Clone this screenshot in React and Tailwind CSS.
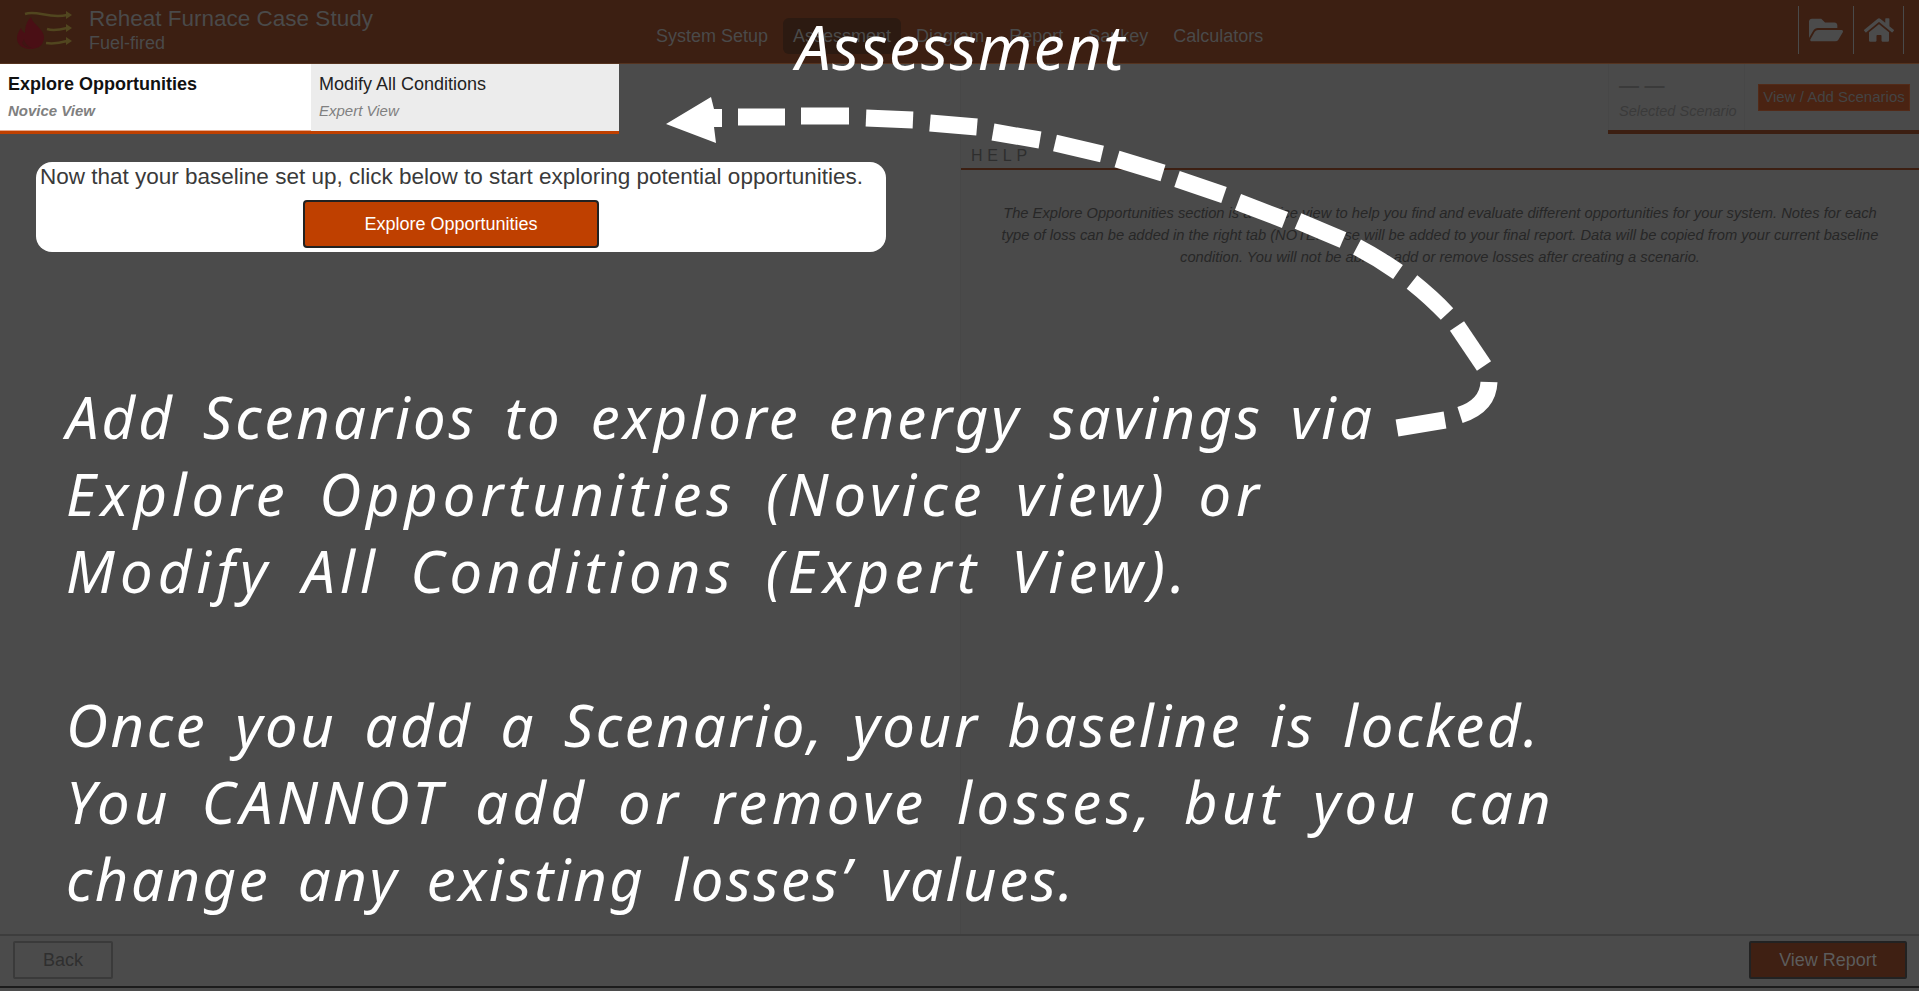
import React from 'react';
import { FaFolderOpen, FaHome } from 'react-icons/fa';

const arial = { fontFamily: '"Liberation Sans", Arial, sans-serif' };

const navItems = ['System Setup', 'Assessment', 'Diagram', 'Report', 'Sankey', 'Calculators'];

// tracking differs per line because the handwritten original isn't evenly spaced
const tutorialLines = [
  { text: 'Add Scenarios to explore energy savings via', className: 'tracking-[3px]' },
  { text: 'Explore Opportunities (Novice view) or', className: 'tracking-[4.8px]' },
  { text: 'Modify All Conditions (Expert View).', className: 'tracking-[5.1px] mb-[77px]' },
  { text: 'Once you add a Scenario, your baseline is locked.', className: 'tracking-[2.7px]' },
  { text: 'You CANNOT add or remove losses, but you can', className: 'tracking-[4.4px]' },
  { text: 'change any existing losses’ values.', className: 'tracking-[2.55px]' },
];

// centre lines of the tutorial arrow's dashes, tail to head
const dashes = [
  'M1397 428 L1445 420',
  'M1460 415 Q1488 406 1489 382',
  'M1457 326 L1484 366',
  'M1412 282 Q1432 298 1447 314',
  'M1357 247 Q1378 258 1398 272',
  'M1298 221 L1343 240',
  'M1238 202 L1285 220',
  'M1177 179 L1224 195',
  'M1117 159 L1163 173',
  'M1055 143 L1102 154',
  'M993 132 L1040 140',
  'M930 123 L977 127',
  'M866 118 L913 120',
  'M801 116 L849 116',
  'M738 117 L785 117',
];

const FurnaceLogo = () => (
  <svg width="62" height="42" viewBox="0 0 62 42" className="shrink-0">
    <path d="M14 6 C15 11 20 14 24 19 C27 23 28 27 26 31 C24 36 19 38 13 38 C6 38 0 34 0 27 C0 23 2 20 4 17 C5 20 6 21 8 22 C8 15 10 10 14 6 Z" fill="#4a0f15" />
    <path d="M5 32 C7 36 11 37 15 37 C11 35 8 33 7 28 Z" fill="#3f1513" />
    <g fill="none" stroke="#51461f" strokeWidth="2.5">
      <path d="M8 3 C20 -1 32 8 50 4" />
      <path d="M30 18 C36 20 42 19 50 17" />
      <path d="M29 32 C36 33 43 32 50 30" />
    </g>
    <g fill="#51461f">
      <path d="M49 0 L55 4 L49 8 Z" />
      <path d="M49 13 L55 17 L49 21 Z" />
      <path d="M49 26 L55 30 L49 34 Z" />
    </g>
  </svg>
);

const Header = () => (
  <header className="h-[64px] shrink-0 flex items-center bg-[#3c1f12] border-b border-[#55331f] relative" style={arial}>
    <div className="flex items-center w-[640px] pl-[17px] gap-[10px] pt-[1px]">
      <FurnaceLogo />
      <div className="flex flex-col mt-[-6px]">
        <span className="text-[22.5px] leading-[28px] text-[#4a4a4a]">Reheat Furnace Case Study</span>
        <span className="text-[18px] leading-[20px] text-[#4a4a4a]">Fuel-fired</span>
      </div>
    </div>
    <nav className="flex items-center ml-[6px] gap-[5px] mt-[9px]">
      {navItems.map((item) =>
        <span
          key={item}
          className={`h-[36px] px-[10px] flex items-center rounded-md text-[18px] text-[#4a4a4a] ${item === 'Assessment' ? 'bg-[#2c1a11]' : ''}`}
        >
          {item}
        </span>
      )}
    </nav>
    <div className="ml-auto flex items-center mr-[15px] h-[48px] mt-[-3px] text-[#4b4b4b]">
      <div className="h-full w-[55px] border-l border-[#4a4a4a] flex items-center justify-center">
        <FaFolderOpen size={34} />
      </div>
      <div className="h-full w-[51px] border-l border-r border-[#4a4a4a] flex items-center justify-center">
        <FaHome size={30} />
      </div>
    </div>
  </header>
);

const LeftPanel = () => (
  <div className="w-[960px] shrink-0 flex flex-col" style={arial}>
    <div className="flex w-[619px] h-[70px] border-b-[3px] border-[#bf4000] bg-white">
      <div className="w-[311px] bg-white pl-[8px] pt-[9px] border-b border-[#e8a98c]">
        <div className="text-[18px] leading-[22px] font-bold text-[#111]">Explore Opportunities</div>
        <div className="text-[15px] leading-[18px] mt-[7px] font-bold italic text-[#808080]">Novice View</div>
      </div>
      <div className="flex-1 bg-[#ececec] pl-[8px] pt-[9px]">
        <div className="text-[18px] leading-[22px] text-[#222]">Modify All Conditions</div>
        <div className="text-[15px] leading-[18px] mt-[7px] italic text-[#808080]">Expert View</div>
      </div>
    </div>
    <div className="mt-[28px] ml-[36px] w-[850px] h-[90px] bg-white rounded-[16px] pl-[4px] flex flex-col">
      <p className="text-[22.5px] leading-[28px] pt-[1px] text-[#3a3a3a] whitespace-nowrap">Now that your baseline set up, click below to start exploring potential opportunities.</p>
      <button className="mt-[9px] ml-[263px] w-[296px] h-[48px] rounded-[4px] border-2 border-[#222] bg-[#bf4000] text-white text-[18px]">
        Explore Opportunities
      </button>
    </div>
  </div>
);

const RightPanel = () => (
  <div className="flex-1 flex flex-col border-l border-[#474747] bg-[#4a4a4a]" style={arial}>
    <div className="h-[70px] flex justify-end">
      <div className="w-[311px] flex border-b-[4px] border-[#3c1f12]">
        <div className="w-[137px] pl-[10px] pt-[9px] border-x border-[#474747]">
          <div className="text-[20px] leading-[24px] font-bold text-[#3a3a3a]">— —</div>
          <div className="text-[14.5px] leading-[18px] mt-[5px] italic text-[#3a3a3a] whitespace-nowrap">Selected Scenario</div>
        </div>
        <div className="flex-1 pl-[13px] pt-[20px]">
          <span className="h-[27px] w-[152px] flex items-center justify-center bg-[#4a2312] border border-[#522a18] text-[15px] text-[#444] whitespace-nowrap">View / Add Scenarios</span>
        </div>
      </div>
    </div>
    <div className="mt-[15px] h-[21px] border-b-[2px] border-[#3c1f12] pl-[10px]">
      <span className="block text-[16px] leading-[18px] tracking-[0.3em] text-[#2e2e2e] pt-[1px] mt-[-3px]">HELP</span>
    </div>
    <p className="mt-[32px] px-[32px] text-center italic text-[14.7px] leading-[22px] text-[#272727]">
      The Explore Opportunities section is a novice view to help you find and evaluate different opportunities for your system. Notes for each type of loss can be added in the right tab (NOTE: these will be added to your final report. Data will be copied from your current baseline condition. You will not be able to add or remove losses after creating a scenario.
    </p>
  </div>
);

const Footer = () => (
  <footer className="h-[52px] shrink-0 flex items-start justify-between border-t-2 border-[#3d3d3d] pt-[5px] pl-[13px] pr-[12px] bg-[#4b4b4b]" style={arial}>
    <button className="w-[100px] h-[38px] rounded-[2px] border-2 border-[#3a3a3a] text-[18px] text-[#2f2f2f]">Back</button>
    <button className="w-[158px] h-[38px] rounded-[2px] border-2 border-[#222] bg-[#3f2013] text-[18px] text-[#5c5c5c]">View Report</button>
  </footer>
);

const TutorialOverlay = () => (
  <>
    <svg width="1919" height="991" viewBox="0 0 1919 991" className="absolute inset-0 pointer-events-none">
      <g fill="none" stroke="#fff" strokeWidth="17">
        {dashes.map((d) => <path key={d} d={d} />)}
      </g>
      <path d="M666 124 L711 97 L714 109 L722 109 L722 127 L714 127 L716 143 Z" fill="#fff" />
    </svg>
    <div className="absolute left-[796px] top-[4px] text-[62px] leading-[84px] italic text-white tracking-[1.5px] whitespace-nowrap" style={{ fontFamily: '"Noto Sans", sans-serif' }}>
      Assessment
    </div>
    <div className="absolute left-[66px] top-[378px] text-[58px] leading-[77px] italic text-white whitespace-nowrap [word-spacing:10px]" style={{ fontFamily: '"Noto Sans", sans-serif' }}>
      {tutorialLines.map((line) => <div key={line.text} className={line.className}>{line.text}</div>)}
    </div>
  </>
);

const App = () => (
  <div className="relative w-[1919px] h-[991px] overflow-hidden flex flex-col bg-[#4b4b4b]">
    <Header />
    <main className="flex flex-1 min-h-0">
      <LeftPanel />
      <RightPanel />
    </main>
    <Footer />
    <div className="h-[5px] shrink-0 border-t-2 border-[#1c1c1c] bg-[#4b4b4b]" />
    <TutorialOverlay />
  </div>
);

export default App;
